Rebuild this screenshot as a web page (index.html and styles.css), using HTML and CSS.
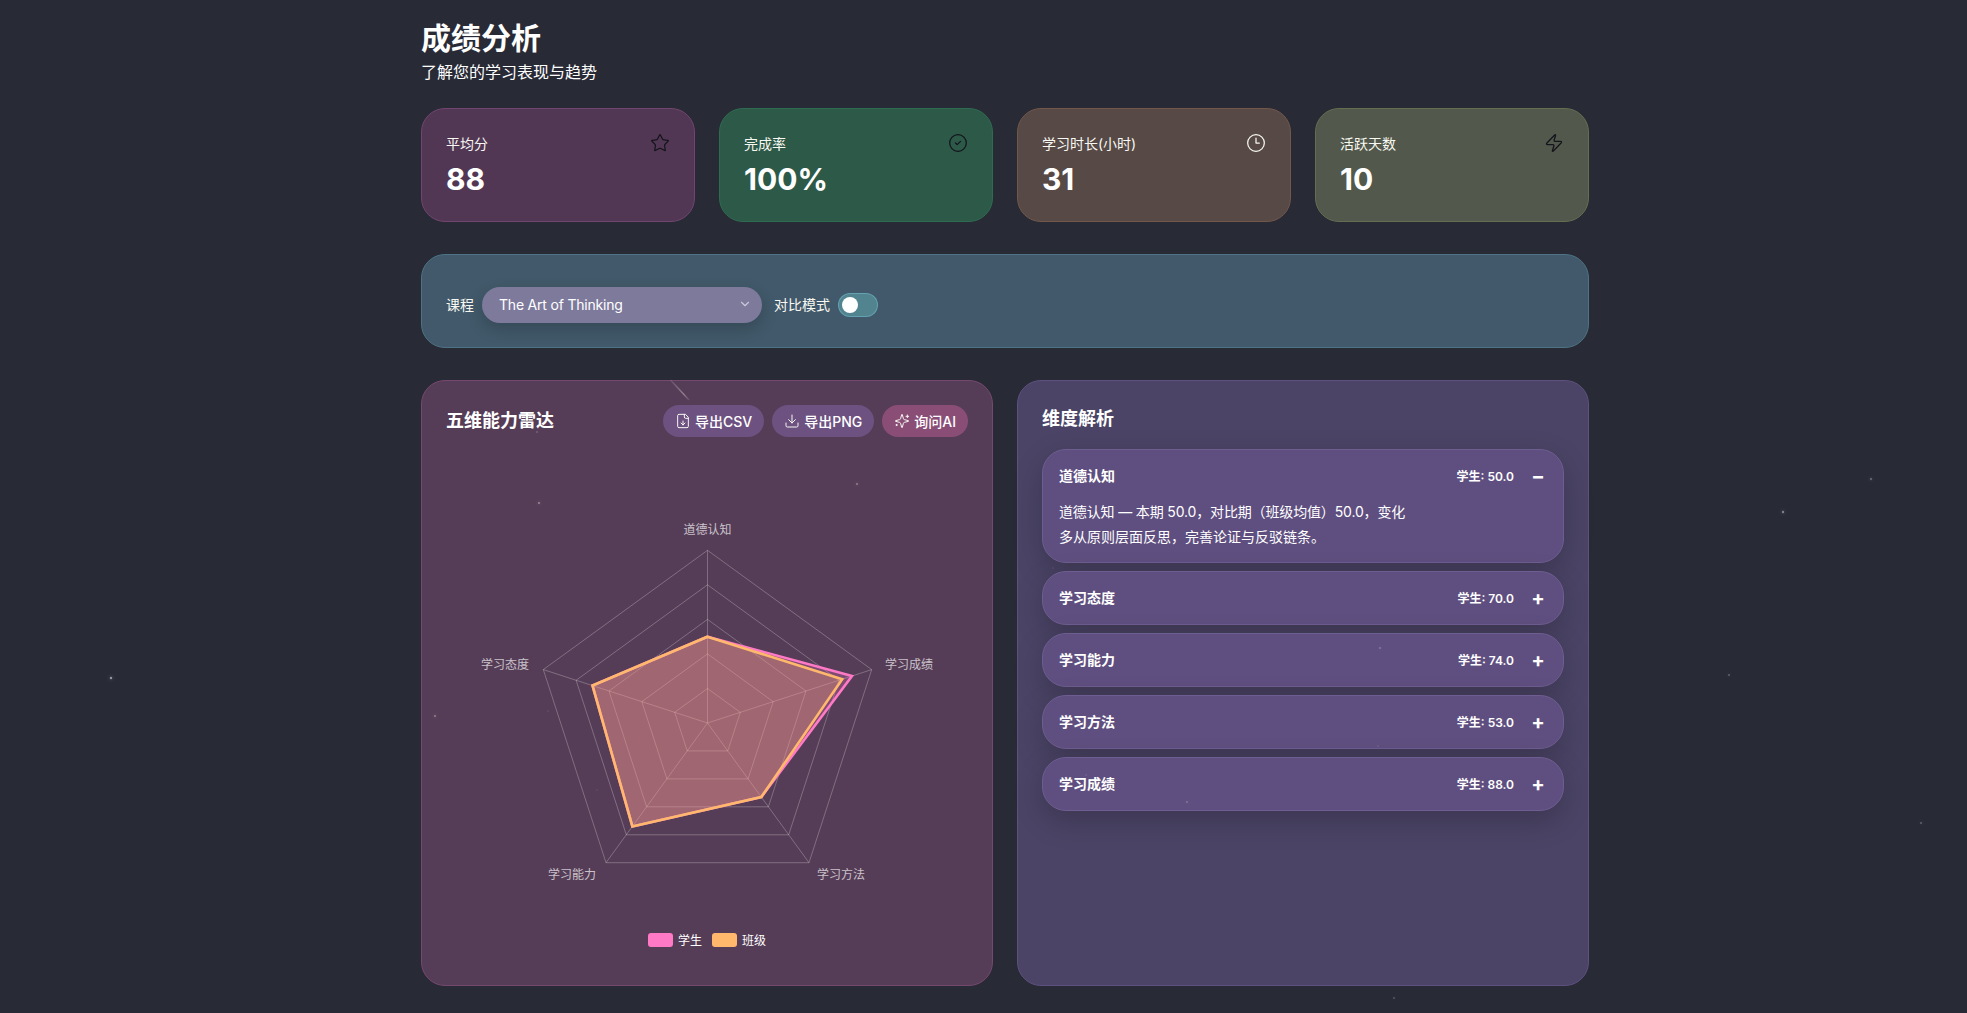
FILE: index.html
```html
<!DOCTYPE html>
<html lang="zh-CN">
<head>
  <meta charset="UTF-8">
  <title>成绩分析</title>
  <link rel="stylesheet" href="styles.css">
</head>
<body>
  <!-- stars and the meteor, over everything -->
  <svg class="sky" width="1967" height="1013" viewBox="0 0 1967 1013">
    <defs>
      <linearGradient id="meteor" x1="0" y1="0" x2="1" y2="1">
        <stop offset="0" stop-color="#fff" stop-opacity="0.1"/>
        <stop offset="0.7" stop-color="#fff" stop-opacity="0.35"/>
        <stop offset="1" stop-color="#fff" stop-opacity="0.1"/>
      </linearGradient>
    </defs>
    <line x1="670.5" y1="380" x2="689" y2="400" stroke="url(#meteor)" stroke-width="1.4"/>
    <circle cx="111" cy="678" r="1.2" fill="#fff" fill-opacity="0.5"/>
    <circle cx="435" cy="716" r="1" fill="#fff" fill-opacity="0.35"/>
    <circle cx="539" cy="503" r="1" fill="#fff" fill-opacity="0.4"/>
    <circle cx="537" cy="432" r="0.8" fill="#fff" fill-opacity="0.3"/>
    <circle cx="857" cy="484" r="1" fill="#fff" fill-opacity="0.35"/>
    <circle cx="548" cy="711" r="0.7" fill="#fff" fill-opacity="0.15"/>
    <circle cx="597" cy="790" r="0.7" fill="#fff" fill-opacity="0.12"/>
    <circle cx="1783" cy="512" r="1.2" fill="#fff" fill-opacity="0.4"/>
    <circle cx="1871" cy="479" r="1.2" fill="#fff" fill-opacity="0.25"/>
    <circle cx="1729" cy="675" r="1" fill="#fff" fill-opacity="0.25"/>
    <circle cx="1921" cy="823" r="1" fill="#fff" fill-opacity="0.25"/>
    <circle cx="1380" cy="648" r="1" fill="#fff" fill-opacity="0.22"/>
    <circle cx="1378" cy="746" r="0.8" fill="#fff" fill-opacity="0.15"/>
    <circle cx="1187" cy="802" r="1" fill="#fff" fill-opacity="0.2"/>
    <circle cx="1086" cy="775" r="0.8" fill="#fff" fill-opacity="0.15"/>
    <circle cx="1053" cy="568" r="0.7" fill="#fff" fill-opacity="0.15"/>
    <circle cx="1394" cy="998" r="1" fill="#fff" fill-opacity="0.2"/>
  </svg>

  <div class="page">
    <header class="page-head">
      <h1>成绩分析</h1>
      <p>了解您的学习表现与趋势</p>
    </header>

    <section class="stats">
      <div class="stat stat-pink">
        <div class="stat-top">
          <span>平均分</span>
          <svg class="stat-icon dark" viewBox="0 0 24 24"><path d="M11.525 2.295a.53.53 0 0 1 .95 0l2.31 4.679a2.123 2.123 0 0 0 1.595 1.16l5.166.756a.53.53 0 0 1 .294.904l-3.736 3.638a2.123 2.123 0 0 0-.611 1.878l.882 5.14a.53.53 0 0 1-.771.56l-4.618-2.428a2.122 2.122 0 0 0-1.973 0L6.396 21.01a.53.53 0 0 1-.77-.56l.881-5.139a2.122 2.122 0 0 0-.611-1.879L2.16 9.795a.53.53 0 0 1 .294-.906l5.165-.755a2.122 2.122 0 0 0 1.597-1.16z"/></svg>
        </div>
        <div class="stat-value">88</div>
      </div>
      <div class="stat stat-green">
        <div class="stat-top">
          <span>完成率</span>
          <svg class="stat-icon dark" viewBox="0 0 24 24"><circle cx="12" cy="12" r="10"/><path d="m9 12 2 2 4-4"/></svg>
        </div>
        <div class="stat-value">100%</div>
      </div>
      <div class="stat stat-orange">
        <div class="stat-top">
          <span>学习时长(小时)</span>
          <svg class="stat-icon" viewBox="0 0 24 24"><circle cx="12" cy="12" r="10"/><path d="M12 6v6h4"/></svg>
        </div>
        <div class="stat-value">31</div>
      </div>
      <div class="stat stat-yellow">
        <div class="stat-top">
          <span>活跃天数</span>
          <svg class="stat-icon dark" viewBox="0 0 24 24"><path d="M4 14a1 1 0 0 1-.78-1.63l9.9-10.2a.5.5 0 0 1 .86.46l-1.92 6.02A1 1 0 0 0 13 10h7a1 1 0 0 1 .78 1.63l-9.9 10.2a.5.5 0 0 1-.86-.46l1.92-6.02A1 1 0 0 0 11 14z"/></svg>
        </div>
        <div class="stat-value">10</div>
      </div>
    </section>

    <section class="controls">
      <span class="ctl-label">课程</span>
      <div class="select">
        <span class="select-text">The Art of Thinking</span>
        <svg class="chevron" viewBox="0 0 24 24"><path d="m6 9 6 6 6-6"/></svg>
      </div>
      <span class="ctl-label">对比模式</span>
      <div class="toggle"><span class="knob"></span></div>
    </section>

    <section class="panels">
      <div class="panel panel-radar">
        <div class="panel-head">
          <h2>五维能力雷达</h2>
          <div class="actions">
            <span class="btn">
              <svg class="btn-icon" viewBox="0 0 24 24"><path d="M15 2H6a2 2 0 0 0-2 2v16a2 2 0 0 0 2 2h12a2 2 0 0 0 2-2V7Z"/><path d="M14 2v4a2 2 0 0 0 2 2h4"/><path d="M12 18v-6"/><path d="m9 15 3 3 3-3"/></svg>
              导出CSV
            </span>
            <span class="btn">
              <svg class="btn-icon" viewBox="0 0 24 24"><path d="M21 15v4a2 2 0 0 1-2 2H5a2 2 0 0 1-2-2v-4"/><path d="m7 10 5 5 5-5"/><path d="M12 15V3"/></svg>
              导出PNG
            </span>
            <span class="btn btn-ai">
              <svg class="btn-icon" viewBox="0 0 24 24"><path d="M9.937 15.5A2 2 0 0 0 8.5 14.063l-6.135-1.582a.5.5 0 0 1 0-.962L8.5 9.936A2 2 0 0 0 9.937 8.5l1.582-6.135a.5.5 0 0 1 .963 0L14.063 8.5A2 2 0 0 0 15.5 9.937l6.135 1.581a.5.5 0 0 1 0 .964L15.5 14.063a2 2 0 0 0-1.437 1.437l-1.582 6.135a.5.5 0 0 1-.963 0z"/><path d="M20 3v4"/><path d="M22 5h-4"/><path d="M4 17v2"/><path d="M5 18H3"/></svg>
              询问AI
            </span>
          </div>
        </div>
        <div class="chart">
          <svg class="radar" id="radar" width="522" height="491" viewBox="0 0 522 491"></svg>
          <div class="legend">
            <span class="swatch swatch-pink"></span><span class="legend-name">学生</span>
            <span class="swatch swatch-orange"></span><span class="legend-name">班级</span>
          </div>
        </div>
      </div>

      <div class="panel panel-dims">
        <h2>维度解析</h2>
        <div class="dims">
          <div class="dim">
            <div class="dim-head">
              <span class="dim-name">道德认知</span>
              <span class="dim-score">学生: 50.0</span>
              <span class="dim-sign">−</span>
            </div>
            <div class="dim-body">
              <div class="dim-line">道德认知 — 本期 50.0，对比期（班级均值）50.0，变化</div>
              <div>多从原则层面反思，完善论证与反驳链条。</div>
            </div>
          </div>
          <div class="dim">
            <div class="dim-head">
              <span class="dim-name">学习态度</span>
              <span class="dim-score">学生: 70.0</span>
              <span class="dim-sign">+</span>
            </div>
          </div>
          <div class="dim">
            <div class="dim-head">
              <span class="dim-name">学习能力</span>
              <span class="dim-score">学生: 74.0</span>
              <span class="dim-sign">+</span>
            </div>
          </div>
          <div class="dim">
            <div class="dim-head">
              <span class="dim-name">学习方法</span>
              <span class="dim-score">学生: 53.0</span>
              <span class="dim-sign">+</span>
            </div>
          </div>
          <div class="dim">
            <div class="dim-head">
              <span class="dim-name">学习成绩</span>
              <span class="dim-score">学生: 88.0</span>
              <span class="dim-sign">+</span>
            </div>
          </div>
        </div>
      </div>
    </section>
  </div>

  <script>
    // draw the radar: clockwise from the top
    var labels = ['道德认知', '学习成绩', '学习方法', '学习能力', '学习态度'];
    var student = [50, 88, 53, 74, 70];
    var klass = [50, 82, 53, 74, 70];
    var labelPos = [[261.5, 88], [463, 223], [395, 433], [126, 433], [59, 223]];
    var cx = 261.5, cy = 280, R = 172.7;
    var svg = document.getElementById('radar');
    var out = '';

    function point(i, val) {
      var a = (i * 72 - 90) * Math.PI / 180;
      return [cx + Math.cos(a) * R * val / 100, cy + Math.sin(a) * R * val / 100];
    }
    function ring(vals) {
      var pts = [];
      for (var i = 0; i < 5; i++) pts.push(point(i, vals[i]).map(function (n) { return n.toFixed(1); }).join(','));
      return pts.join(' ');
    }

    for (var r = 20; r <= 100; r += 20) {
      out += '<polygon class="grid" points="' + ring([r, r, r, r, r]) + '"/>';
    }
    for (var i = 0; i < 5; i++) {
      var p = point(i, 100);
      out += '<line class="grid" x1="' + cx + '" y1="' + cy + '" x2="' + p[0].toFixed(1) + '" y2="' + p[1].toFixed(1) + '"/>';
    }
    out += '<polygon class="area-pink" points="' + ring(student) + '"/>';
    out += '<polygon class="area-orange" points="' + ring(klass) + '"/>';
    for (var j = 0; j < 5; j++) {
      out += '<text class="axis" x="' + labelPos[j][0] + '" y="' + labelPos[j][1] + '">' + labels[j] + '</text>';
    }
    svg.innerHTML = out;
  </script>
</body>
</html>
```

FILE: styles.css
```css
* {
  box-sizing: border-box;
}
html, body {
  margin: 0;
  height: 100%;
}
body {
  background: #282a36;
  color: #f8f8f2;
  font-family: Inter, "Noto Sans CJK SC", sans-serif;
  font-size: 14px;
  overflow: hidden;
}
h1, h2, p {
  margin: 0;
}
.sky {
  position: fixed;
  left: 0;
  top: 0;
  z-index: 5;
  pointer-events: none;
}
.sky circle {
  filter: drop-shadow(0 0 2px rgba(255, 255, 255, 0.7));
}
.page {
  width: 1168px;
  margin-left: 421px;
  padding-top: 20px;
}

.page-head h1 {
  font-size: 30px;
  line-height: 36px;
  font-weight: 700;
  color: #fff;
}
.page-head p {
  margin-top: 4px;
  font-size: 16px;
  line-height: 24px;
  color: #fff;
}

.stats {
  display: grid;
  grid-template-columns: repeat(4, 1fr);
  gap: 24px;
  margin-top: 24px;
}
.stat {
  height: 114px;
  padding: 24px;
  border-radius: 24px;
  border: 1px solid;
}
.stat-pink { background: #523755; border-color: #71456f; }
.stat-green { background: #2d5948; border-color: #2f6b50; }
.stat-orange { background: #574946; border-color: #72574b; }
.stat-yellow { background: #52584b; border-color: #666d50; }
.stat-top {
  display: flex;
  justify-content: space-between;
  align-items: center;
  height: 20px;
  line-height: 19px;
}
.stat-icon {
  width: 20px;
  height: 20px;
  fill: none;
  stroke: #f8f8f2;
  stroke-width: 1.5;
  stroke-linecap: round;
  stroke-linejoin: round;
}
.stat-icon.dark {
  stroke: #14141c;
}
.stat-value {
  margin-top: 8px;
  font-size: 30px;
  line-height: 36px;
  font-weight: 700;
  color: #fff;
}

.controls {
  display: flex;
  align-items: center;
  gap: 8px;
  height: 94px;
  margin-top: 32px;
  padding: 8px 24px 0;
  border-radius: 24px;
  border: 1px solid #4d7384;
  background: #41596a;
}
.ctl-label {
  padding-bottom: 2px;
}
.select {
  display: flex;
  justify-content: space-between;
  align-items: center;
  width: 280px;
  height: 36px;
  margin-right: 4px;
  padding: 0 10px 2px 17px;
  border-radius: 18px;
  background: #7e7a9c;
  box-shadow: 0 6px 16px rgba(0, 0, 0, 0.18);
  color: #fff;
}
.select-text {
  letter-spacing: -0.2px;
}
.chevron {
  width: 14px;
  height: 14px;
  fill: none;
  stroke: rgba(255, 255, 255, 0.6);
  stroke-width: 2;
  stroke-linecap: round;
  stroke-linejoin: round;
}
.toggle {
  width: 40px;
  height: 24px;
  padding: 4px;
  border-radius: 12px;
  background: #528490;
  border: 1px solid rgba(139, 233, 253, 0.3);
}
.knob {
  display: block;
  width: 16px;
  height: 16px;
  margin: -1px 0 0 -1px;
  border-radius: 50%;
  background: #fff;
}

.panels {
  display: grid;
  grid-template-columns: 1fr 1fr;
  gap: 24px;
  margin-top: 32px;
}
.panel {
  height: 606px;
  padding: 24px;
  border-radius: 24px;
  border: 1px solid;
}
.panel h2 {
  font-size: 18px;
  line-height: 28px;
  font-weight: 700;
  color: #fff;
}
.panel-radar {
  background: #563d57;
  border-color: #75486f;
}
.panel-dims {
  background: #4b4466;
  border-color: #5e5180;
}
.panel-head {
  display: flex;
  justify-content: space-between;
  align-items: center;
}
.actions {
  display: flex;
  gap: 8px;
}
.btn {
  display: flex;
  align-items: center;
  gap: 4px;
  height: 32px;
  padding: 0 12px;
  border-radius: 16px;
  background: #6d5180;
  color: #fff;
  font-weight: 500;
  white-space: nowrap;
}
.btn-ai {
  background: #8a4d76;
}
.btn-icon {
  width: 16px;
  height: 16px;
  fill: none;
  stroke: #f8f8f2;
  stroke-width: 1.5;
  stroke-linecap: round;
  stroke-linejoin: round;
}

.radar {
  display: block;
  margin-top: 6px;
}
.radar .grid {
  fill: none;
  stroke: rgba(255, 255, 255, 0.25);
  stroke-width: 1;
}
.radar .area-pink {
  fill: rgba(255, 121, 198, 0.25);
  stroke: #ff79c6;
  stroke-width: 2.6;
}
.radar .area-orange {
  fill: rgba(255, 184, 108, 0.25);
  stroke: #ffb86c;
  stroke-width: 2.6;
}
.radar .axis {
  fill: rgba(255, 255, 255, 0.7);
  font-size: 12px;
  text-anchor: middle;
  dominant-baseline: middle;
}
.legend {
  display: flex;
  justify-content: center;
  align-items: center;
  margin-top: -3px;
  font-size: 12px;
  color: #fff;
}
.swatch {
  width: 25px;
  height: 14px;
  border-radius: 3px;
  margin-right: 5px;
}
.swatch-pink { background: #ff79c6; }
.swatch-orange { background: #ffb86c; }
.legend-name {
  margin-right: 10px;
}
.legend-name:last-child {
  margin-right: 0;
}

.dims {
  display: flex;
  flex-direction: column;
  gap: 8px;
  margin-top: 16px;
}
.dim {
  border-radius: 24px;
  border: 1px solid #6e5d90;
  background: #5f4f80;
  box-shadow: 0 10px 30px rgba(0, 0, 0, 0.2);
}
.dim-head {
  display: flex;
  align-items: center;
  height: 52px;
  padding: 0 16px 2px;
}
.dim-name {
  flex: 1;
  font-weight: 700;
  color: #fff;
}
.dim-score {
  font-size: 12px;
  font-weight: 600;
  color: #fff;
}
.dim-sign {
  width: 20px;
  margin-left: 14px;
  margin-right: -1px;
  padding-top: 2px;
  text-align: center;
  font-size: 20px;
  line-height: 20px;
  font-weight: 700;
  color: #fff;
}
.dim-body {
  padding: 0 16px 13px;
  margin-top: -2px;
  line-height: 24.5px;
  color: #fff;
}
.dim-line {
  letter-spacing: -0.15px;
}
```
